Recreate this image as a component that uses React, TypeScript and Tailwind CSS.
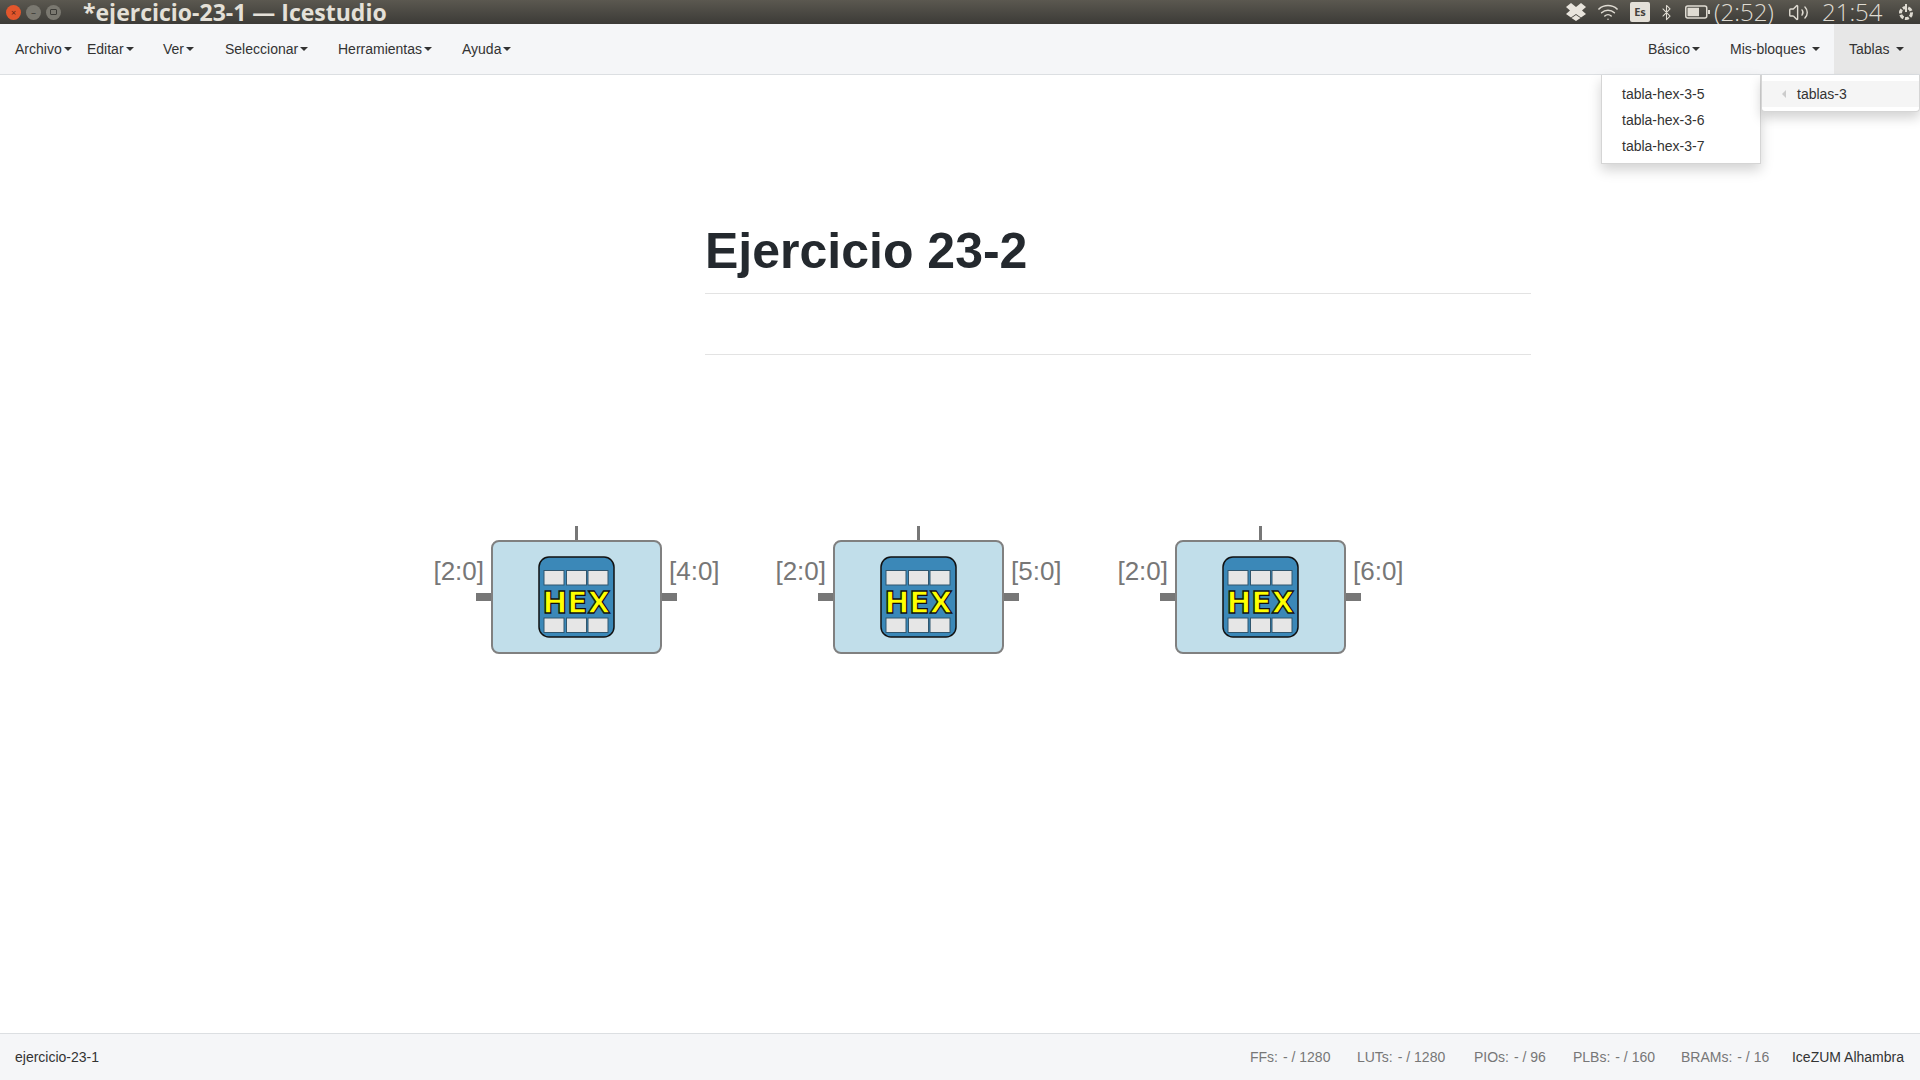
import { Bluetooth, Volume2, Wifi } from "lucide-react"

const menuLeft = [
  { label: "Archivo", width: "w-[72px]" },
  { label: "Editar", width: "w-[76px]" },
  { label: "Ver", width: "w-[62px]" },
  { label: "Seleccionar", width: "w-[113px]" },
  { label: "Herramientas", width: "w-[124px]" },
  { label: "Ayuda", width: "w-[70px]" },
]

const stats = [
  { label: "FFs:", value: "- / 1280", width: "w-[107px]" },
  { label: "LUTs:", value: "- / 1280", width: "w-[117px]" },
  { label: "PIOs:", value: "- / 96", width: "w-[99px]" },
  { label: "PLBs:", value: "- / 160", width: "w-[108px]" },
  { label: "BRAMs:", value: "- / 16", width: "w-[111px]" },
]

const blocks = [
  { id: 1, left: "left-[491px]", out: "[4:0]" },
  { id: 2, left: "left-[833px]", out: "[5:0]" },
  { id: 3, left: "left-[1175px]", out: "[6:0]" },
]

function Caret() {
  return <span className="ml-[2px] inline-block h-0 w-0 border-x-4 border-t-4 border-x-transparent border-t-[#333]" />
}

function HexIcon() {
  const columns = [6, 28.5, 50]
  return (
    <svg width="78" height="83" viewBox="0 0 78 83" className="block">
      <rect x="1" y="1" width="75" height="80" rx="10" fill="#3b88b8" stroke="#111" strokeWidth="1.5" />
      {columns.map((x) => (
        <g key={x}>
          <rect x={x} y="14.5" width="20" height="14.5" fill="#e6e6e6" stroke="#30566e" strokeWidth="1" />
          <rect x={x} y="62" width="20" height="14.5" fill="#e6e6e6" stroke="#30566e" strokeWidth="1" />
        </g>
      ))}
      <text
        x="38.5"
        y="57"
        textAnchor="middle"
        textLength="68"
        lengthAdjust="spacingAndGlyphs"
        fill="#ffff00"
        stroke="#111"
        strokeWidth="1.3"
        fontSize="30"
        fontWeight="700"
        fontFamily="'DejaVu Sans', sans-serif"
      >
        HEX
      </text>
    </svg>
  )
}

function Block({ left, out }: { left: string; out: string }) {
  return (
    <div className={`absolute top-[465px] h-[114px] w-[171px] ${left}`}>
      <div className="absolute left-[84px] top-[-14px] h-[14px] w-[3px] bg-[#777]" />
      <div className="absolute left-[-15px] top-[53px] h-[8px] w-[15px] bg-[#777]" />
      <div className="absolute right-[-15px] top-[53px] h-[8px] w-[15px] bg-[#777]" />
      <span className="absolute right-[178px] top-[16px] text-[26px] leading-[30px] text-[#777]">[2:0]</span>
      <span className="absolute left-[178px] top-[16px] text-[26px] leading-[30px] text-[#777]">{out}</span>
      <div className="flex h-full w-full items-center justify-center rounded-[8px] border-2 border-[#808080] bg-[#c1deea]">
        <HexIcon />
      </div>
    </div>
  )
}

function TrayIcons() {
  return (
    <div className="flex items-center text-[#dfdbd2]">
      <svg width="20" height="18" viewBox="0 0 20 18" className="ml-0" fill="#e8e4dc">
        <path d="M5 0l5 4 5-4 5 4-4 3.5 4 3.5-5 3.5-5-3.5-5 3.5-5-3.5 4-3.5L0 4zM5.500 15l4.500-3 4.500 3-4.500 3z" />
      </svg>
      <Wifi size={22} strokeWidth={1.6} className="ml-[11px]" />
      <span className="ml-[11px] flex h-[20px] w-[20px] items-center justify-center rounded-[2px] bg-[#e4e0d8] text-[11px] font-bold text-[#44423d]">
        Es
      </span>
      <Bluetooth size={17} strokeWidth={1.5} className="ml-[8px]" />
      <svg width="25" height="14" viewBox="0 0 25 14" className="ml-[10px]">
        <rect x="0.750" y="1" width="21" height="12" rx="2" fill="none" stroke="#dfdbd2" strokeWidth="1.500" />
        <rect x="2.500" y="2.750" width="11.500" height="8.500" fill="#dfdbd2" />
        <rect x="23" y="5" width="2" height="4" fill="#dfdbd2" />
      </svg>
      <span className="ml-[4px] w-[61px] text-[24px] font-light leading-[24px]">(2:52)</span>
      <Volume2 size={21} strokeWidth={1.6} className="ml-[13px]" />
      <span className="ml-[13px] w-[63px] text-[24px] font-light leading-[24px]">21:54</span>
      <svg width="18" height="18" viewBox="0 0 18 18" className="ml-[12px]" fill="none" stroke="#dfdbd2" strokeWidth="2">
        <circle cx="9" cy="10" r="5.500" strokeDasharray="4 1.500" strokeWidth="3" />
        <path d="M9 1v8" />
      </svg>
    </div>
  )
}

export default function App() {
  return (
    <div className="flex h-screen w-full flex-col overflow-hidden bg-white font-['Liberation_Sans',sans-serif] text-[14px] text-[#333]">
      <div className="flex h-[24px] shrink-0 items-center bg-gradient-to-b from-[#5b5850] to-[#3c3b37] pr-[5px] font-['Open_Sans',sans-serif]">
        <div className="flex items-center gap-[5px] pl-[6px]">
          <span className="flex h-[15px] w-[15px] items-center justify-center rounded-full bg-[#e2562c] text-[9px] leading-none text-[#5b2312]">×</span>
          <span className="flex h-[15px] w-[15px] items-center justify-center rounded-full bg-[#7a7870] text-[10px] leading-none text-[#3c3b37]">–</span>
          <span className="flex h-[15px] w-[15px] items-center justify-center rounded-full bg-[#7a7870]">
            <span className="h-[6px] w-[7px] rounded-[1px] border border-[#3c3b37]" />
          </span>
        </div>
        <span className="ml-[22px] text-[23px] font-bold leading-[24px] text-[#e4e0d8]">*ejercicio-23-1 — Icestudio</span>
        <div className="ml-auto">
          <TrayIcons />
        </div>
      </div>

      <nav className="flex h-[51px] shrink-0 items-stretch justify-between border-b border-[#dcdfe2] bg-[#f5f6f8]">
        <div className="flex items-center pl-[15px]">
          {menuLeft.map((item) => (
            <span key={item.label} className={`flex items-center ${item.width}`}>
              {item.label}
              <Caret />
            </span>
          ))}
        </div>
        <div className="flex items-stretch">
          <span className="flex w-[82px] items-center">
            Básico
            <Caret />
          </span>
          <span className="flex w-[104px] items-center">
            Mis-bloques
            <span className="ml-[7px] inline-block h-0 w-0 border-x-4 border-t-4 border-x-transparent border-t-[#333]" />
          </span>
          <span className="flex w-[86px] items-center bg-[#e7e7e7] pl-[15px]">
            Tablas
            <span className="ml-[7px] inline-block h-0 w-0 border-x-4 border-t-4 border-x-transparent border-t-[#333]" />
          </span>
        </div>
      </nav>

      <main className="relative flex-1">
        <div className="ml-[705px] w-[826px]">
          <h1 className="mt-[146px] border-b border-[#e3e3e3] pb-[12px] text-[50px] font-bold leading-[60px] text-[#24292e]">
            Ejercicio 23-2
          </h1>
          <hr className="mt-[60px] border-[#e3e3e3]" />
        </div>

        {blocks.map((b) => (
          <Block key={b.id} left={b.left} out={b.out} />
        ))}

        <div className="absolute left-[1601px] top-0 flex h-[89px] w-[160px] flex-col border border-t-0 border-[#d5d5d5] bg-white pt-[6px] shadow-[0_6px_12px_rgba(0,0,0,0.175)]">
          {["tabla-hex-3-5", "tabla-hex-3-6", "tabla-hex-3-7"].map((t) => (
            <span key={t} className="flex h-[26px] items-center pl-[20px]">
              {t}
            </span>
          ))}
        </div>
        <div className="absolute left-[1761px] top-0 h-[37px] w-[159px] rounded-b-[4px] border border-t-0 border-[#d5d5d5] bg-white pt-[6px] shadow-[0_6px_12px_rgba(0,0,0,0.175)]">
          <div className="flex h-[26px] items-center bg-[#f5f5f5] pl-[20px]">
            <span className="h-0 w-0 border-y-4 border-r-4 border-y-transparent border-r-[#ccc]" />
            <span className="ml-[11px]">tablas-3</span>
          </div>
        </div>
      </main>

      <footer className="flex h-[47px] shrink-0 items-center justify-between border-t border-[#dcdfe2] bg-[#f5f6f8] pl-[15px] pr-[16px]">
        <span>ejercicio-23-1</span>
        <div className="flex items-center">
          {stats.map((s) => (
            <span key={s.label} className={`flex gap-[5px] text-[#777] ${s.width}`}>
              <span>{s.label}</span>
              <span>{s.value}</span>
            </span>
          ))}
          <span className="text-[#333]">IceZUM Alhambra</span>
        </div>
      </footer>
    </div>
  )
}
